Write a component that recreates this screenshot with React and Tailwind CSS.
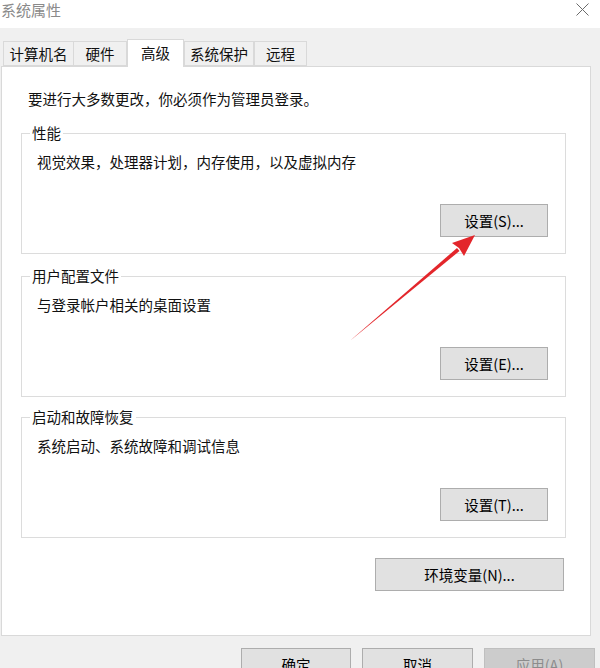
import React from 'react';

const font = { fontFamily: '"Microsoft YaHei", "Noto Sans CJK SC", "Noto Sans", sans-serif' };

const tabs = [
  { label: '计算机名', w: 'w-[71px]' },
  { label: '硬件', w: 'w-[53px]' },
  { label: '高级', w: 'w-[57px]', active: true },
  { label: '系统保护', w: 'w-[70px]' },
  { label: '远程', w: 'w-[53px]' },
];

const groups = [
  { title: '性能', text: '视觉效果，处理器计划，内存使用，以及虚拟内存', btn: '设置(S)...', mt: 'mt-[24px]' },
  { title: '用户配置文件', text: '与登录帐户相关的桌面设置', btn: '设置(E)...', mt: 'mt-[22px]' },
  { title: '启动和故障恢复', text: '系统启动、系统故障和调试信息', btn: '设置(T)...', mt: 'mt-[20px]' },
];

function Button({ children, className = '', disabled }) {
  return (
    <div
      className={
        'h-[33px] flex items-center justify-center border text-[14.5px] leading-[20px] ' +
        (disabled ? 'bg-[#cccccc] border-[#bfbfbf] text-[#8c8c8c] ' : 'bg-[#e1e1e1] border-[#adadad] text-black ') +
        className
      }
    >
      {children}
    </div>
  );
}

function Group({ title, text, btn, mt }) {
  return (
    <div className={'relative h-[121px] border border-[#dcdcdc] flex flex-col pl-[15px] pr-[17px] pt-[18px] pb-[16px] ' + mt}>
      <span className="absolute -top-[11px] left-[8px] bg-white px-[2px] text-[14.5px] leading-[20px]">{title}</span>
      <div className="text-[14.5px] leading-[20px]">{text}</div>
      <div className="mt-auto flex justify-end">
        <Button className="w-[108px]">{btn}</Button>
      </div>
    </div>
  );
}

export default function App() {
  return (
    <div className="relative w-[600px] h-[668px] overflow-hidden bg-[#f0f0f0] text-[#111]" style={font}>
      {/* title bar */}
      <div className="h-[28px] bg-white flex items-center justify-between">
        <span className="pl-[1px] text-[15px] leading-[20px] text-[#8a8a8a] -mt-[8px]">系统属性</span>
        <svg width="13" height="13" viewBox="0 0 13 13" className="mr-[11px] -mt-[9px]">
          <path d="M0.5 0.5 L12.5 12.5 M12.5 0.5 L0.5 12.5" stroke="#6b6b6b" strokeWidth="1" fill="none" />
        </svg>
      </div>

      {/* tabs */}
      <div className="pt-[10px] pl-[3px] flex items-end h-[38px] relative z-10">
        {tabs.map((t, i) =>
          t.active ? (
            <div key={t.label} className={t.w + ' h-[28px] -mb-[1px] bg-white border border-b-0 border-[#d9d9d9] flex items-start justify-center pt-[3px] text-[14.5px] leading-[20px]'}>
              {t.label}
            </div>
          ) : (
            <div
              key={t.label}
              className={t.w + ' h-[25px] border border-[#d9d9d9] flex items-center justify-center text-[14.5px] leading-[20px] ' + (i === 1 ? 'border-l-0' : '')}
            >
              {t.label}
            </div>
          )
        )}
      </div>

      {/* panel */}
      <div className="ml-[1px] w-[590px] h-[570px] bg-white border border-[#d9d9d9] pl-[19px] pr-[24px] pt-[22px]">
        <div className="pl-[7px] text-[14.5px] leading-[20px]">要进行大多数更改，你必须作为管理员登录。</div>
        {groups.map(g => (
          <Group key={g.title} {...g} />
        ))}
        <div className="mt-[20px] flex justify-end pr-[2px]">
          <Button className="w-[189px]">环境变量(N)...</Button>
        </div>
      </div>

      {/* dialog buttons */}
      <div className="mt-[12px] flex pl-[241px] gap-[11px]">
        <Button className="w-[110px]">确定</Button>
        <Button className="w-[111px]">取消</Button>
        <Button className="w-[111px]" disabled>应用(A)</Button>
      </div>

      {/* annotation arrow */}
      <svg className="absolute left-0 top-0 pointer-events-none" width="600" height="668">
        <polygon points="351,340 459.5,251 457,248 352,339" fill="#e3262b" />
        <polygon points="475,235 452,243 459,248 464,256" fill="#e3262b" />
      </svg>
    </div>
  );
}
